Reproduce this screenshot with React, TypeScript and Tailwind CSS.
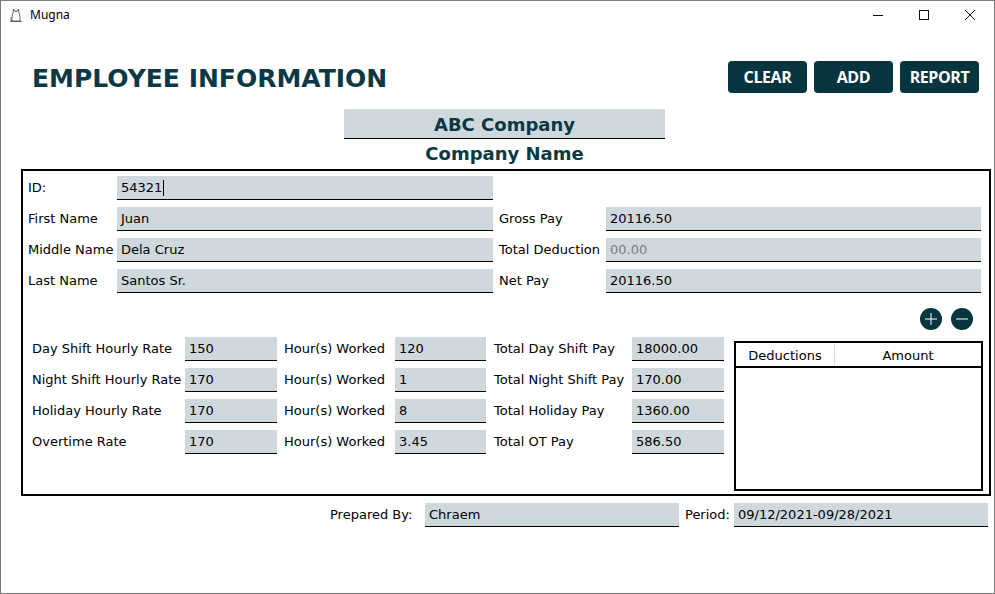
import type React from "react"

const font = { fontFamily: '"DejaVu Sans", Verdana, sans-serif' }

function Field({ value, className, muted, cursor }: { value: string; className: string; muted?: boolean; cursor?: boolean }) {
  return (
    <div className={`h-[24px] bg-[#cfd8dc] border-b border-black flex items-center pl-[4px] text-[13px] ${muted ? "text-[#7d7d7d]" : "text-black"} ${className}`}>
      {value}
      {cursor && <span className="inline-block w-px h-[16px] bg-black ml-px" />}
    </div>
  )
}

function Label({ children, className }: { children: React.ReactNode; className: string }) {
  return <div className={`text-[13px] text-black whitespace-nowrap ${className}`}>{children}</div>
}

function CatIcon() {
  return (
    <svg width="14" height="16" viewBox="0 0 14 16" fill="none" stroke="#555" strokeWidth="0.9">
      <path d="M4 6 L4.5 2 L6 4.5 L8 4.5 L9.5 2 L10 6 C11 8 11 11 11 14 L3 14 C3 11 3 8 4 6 Z" />
      <path d="M1 14.5 L13 14.5" />
      <path d="M3 14 C1.5 13 1.5 11 2.5 10" />
    </svg>
  )
}

export default function App() {
  const rates = [
    ["Day Shift Hourly Rate", "150", "120", "Total Day Shift Pay", "18000.00"],
    ["Night Shift Hourly Rate", "170", "1", "Total Night Shift Pay", "170.00"],
    ["Holiday Hourly Rate", "170", "8", "Total Holiday Pay", "1360.00"],
    ["Overtime Rate", "170", "3.45", "Total OT Pay", "586.50"],
  ]

  return (
    <div className="w-[995px] h-[594px] border border-[#7a7a7a] bg-white flex flex-col overflow-hidden" style={font}>
      {/* Title bar */}
      <div className="h-[30px] flex items-center shrink-0">
        <div className="ml-[8px] mt-[-2px]">
          <CatIcon />
        </div>
        <span className="ml-[7px] text-[12px] text-black mt-[-2px]" style={{ fontFamily: '"Noto Sans", "Liberation Sans", sans-serif' }}>
          Mugna
        </span>
        <div className="ml-auto flex items-center mr-[18px] mt-[-2px]">
          <svg width="12" height="12" viewBox="0 0 12 12" className="mr-[34px]">
            <path d="M1 6.5 H11" stroke="#111" strokeWidth="1" />
          </svg>
          <svg width="12" height="12" viewBox="0 0 12 12" className="mr-[34px]">
            <rect x="1.5" y="1.5" width="9" height="9" fill="none" stroke="#111" strokeWidth="1" />
          </svg>
          <svg width="12" height="12" viewBox="0 0 12 12">
            <path d="M1 1 L11 11 M11 1 L1 11" stroke="#111" strokeWidth="1" />
          </svg>
        </div>
      </div>

      {/* Header */}
      <div className="flex items-center mt-[30px] h-[32px]">
        <h1 className="ml-[31px] mt-[2px] text-[25px] font-bold text-[#0a3844] leading-none">EMPLOYEE INFORMATION</h1>
        <div className="ml-auto mr-[15px] flex gap-[7px]" style={{ fontFamily: '"Open Sans", sans-serif' }}>
          {["CLEAR", "ADD", "REPORT"].map((b) => (
            <button key={b} className="w-[79px] h-[32px] rounded-[4px] bg-[#07353f] text-white font-bold text-[16px] tracking-tight">
              {b}
            </button>
          ))}
        </div>
      </div>

      {/* Company */}
      <div className="ml-[343px] mt-[16px] w-[321px] h-[30px] bg-[#cfd8dc] border-b border-black flex items-center justify-center pt-[2px] text-[18px] font-bold text-[#0a3844]">
        ABC Company
      </div>
      <div className="ml-[343px] w-[321px] h-[28px] flex items-center justify-center text-[18px] font-bold text-[#0a3844]">
        Company Name
      </div>

      {/* Main box */}
      <div className="ml-[20px] mt-[2px] w-[970px] h-[327px] border-2 border-black pl-[5px] pt-[5px] flex flex-col">
        <div className="flex flex-col gap-[7px]">
          <div className="flex items-center">
            <Label className="w-[89px]">ID:</Label>
            <Field value="54321" className="w-[376px]" cursor />
          </div>
          {[
            ["First Name", "Juan", "Gross Pay", "20116.50"],
            ["Middle Name", "Dela Cruz", "Total Deduction", "00.00"],
            ["Last Name", "Santos Sr.", "Net Pay", "20116.50"],
          ].map(([l, v, rl, rv]) => (
            <div key={l} className="flex items-center">
              <Label className="w-[89px]">{l}</Label>
              <Field value={v} className="w-[376px]" />
              <Label className="ml-[6px] w-[107px]">{rl}</Label>
              <Field value={rv} className="w-[375px]" muted={rl === "Total Deduction"} />
            </div>
          ))}
        </div>

        <div className="flex justify-end gap-[9px] mt-[15px] mr-[16px]">
          {["plus", "minus"].map((k) => (
            <div key={k} className="w-[22px] h-[22px] rounded-full bg-[#07353f] flex items-center justify-center">
              <svg width="14" height="14" viewBox="0 0 14 14">
                {k === "plus" && <path d="M7 1 V13" stroke="#fff" strokeWidth="1" />}
                <path d="M1 7 H13" stroke="#fff" strokeWidth="1" />
              </svg>
            </div>
          ))}
        </div>

        <div className="flex mt-[7px]">
          <div className="flex flex-col gap-[7px] pl-[4px]">
            {rates.map(([l, r, h, tl, tv]) => (
              <div key={l} className="flex items-center">
                <Label className="w-[153px]">{l}</Label>
                <Field value={r} className="w-[92px]" />
                <Label className="ml-[7px] w-[111px]">Hour(s) Worked</Label>
                <Field value={h} className="w-[91px]" />
                <Label className="ml-[8px] w-[138px]">{tl}</Label>
                <Field value={tv} className="w-[92px]" />
              </div>
            ))}
          </div>
          <div className="ml-[10px] mt-[4px] w-[249px] h-[150px] border-2 border-black flex flex-col">
            <div className="h-[25px] flex border-b-2 border-black text-[13px] pt-[2px]">
              <div className="w-[99px] flex items-center justify-center border-r border-[#dcdcdc]">Deductions</div>
              <div className="flex-1 flex items-center justify-center">Amount</div>
            </div>
          </div>
        </div>
      </div>

      {/* Footer */}
      <div className="flex items-center mt-[7px]">
        <Label className="ml-[329px] w-[95px]">Prepared By:</Label>
        <Field value="Chraem" className="w-[254px]" />
        <Label className="ml-[6px] w-[49px]">Period:</Label>
        <Field value="09/12/2021-09/28/2021" className="w-[254px]" />
      </div>
    </div>
  )
}
